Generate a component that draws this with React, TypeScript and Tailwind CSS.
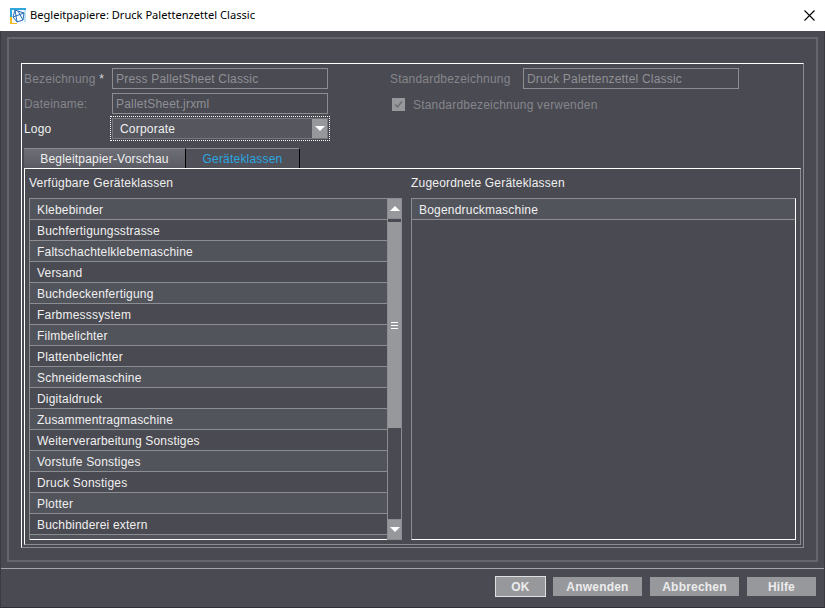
const available = [
  "Klebebinder",
  "Buchfertigungsstrasse",
  "Faltschachtelklebemaschine",
  "Versand",
  "Buchdeckenfertigung",
  "Farbmesssystem",
  "Filmbelichter",
  "Plattenbelichter",
  "Schneidemaschine",
  "Digitaldruck",
  "Zusammentragmaschine",
  "Weiterverarbeitung Sonstiges",
  "Vorstufe Sonstiges",
  "Druck Sonstiges",
  "Plotter",
  "Buchbinderei extern",
];

function TextField({ value }: { value: string }) {
  return (
    <div className="flex h-[21px] w-[216px] items-center border border-[#8c8d92] pl-[3px] text-[#8f9095]">
      {value}
    </div>
  );
}

function Row({ label, light }: { label: string; light: boolean }) {
  return (
    <div className={`flex h-[21px] items-center border-b border-[#8c8d92] pl-[7px] pt-[2px] text-[#f0f0f0] ${light ? "bg-[#52545c]" : ""}`}>
      {label}
    </div>
  );
}

function Arrow({ up }: { up?: boolean }) {
  return (
    <svg width="10" height="5" viewBox="0 0 10 5" className="fill-white">
      <path d={up ? "M5 0 L10 5 H0 Z" : "M0 0 H10 L5 5 Z"} />
    </svg>
  );
}

function FooterButton({ label, width, focus }: { label: string; width: string; focus?: boolean }) {
  return (
    <button className={`flex items-center justify-center bg-[#97989c] font-bold tracking-[0.2px] text-[#ececec] ${width} ${focus ? "-mr-px h-[21px] border border-[#e0e0e0]" : "h-[19px]"}`}>
      {label}
    </button>
  );
}

function AppIcon() {
  return (
    <svg width="16" height="16" viewBox="0 0 16 16" fill="none">
      <rect width="16" height="16" fill="#f4fafd" />
      <path d="M0 1 H16" stroke="#2fa6dc" strokeWidth="2" />
      <path d="M1 2 V9" stroke="#2fa6dc" strokeWidth="2" />
      <path d="M1 9 V16 H7" stroke="#f2bc1e" strokeWidth="2" />
      <path d="M15 2 V14" stroke="#8fd0ec" strokeWidth="1" />
      <path d="M5 2 L3 9 L7 14 L13 12 L14 5 L8 3 Z M5 2 L7 14 M3 9 L14 5 M8 3 L13 12" stroke="#2b6fb8" strokeWidth="1" />
    </svg>
  );
}

export default function App() {
  return (
    <div className="flex h-[608px] w-[825px] flex-col overflow-hidden bg-[#4a4a52] font-['Liberation_Sans',sans-serif] text-[12px] tracking-[0.2px]">
      <div className="flex h-[31px] shrink-0 items-center bg-white pl-[10px] pr-[10px] font-['Noto_Sans',sans-serif] tracking-normal text-black">
        <AppIcon />
        <span className="ml-[4px] flex-1 text-[11.1px]">Begleitpapiere: Druck Palettenzettel Classic</span>
        <svg width="11" height="11" viewBox="0 0 11 11" className="stroke-black">
          <path d="M0.5 0.5 L10.5 10.5 M10.5 0.5 L0.5 10.5" strokeWidth="1.1" />
        </svg>
      </div>

      <div className="flex flex-1 flex-col border-x border-b border-x-[#3a3a40] border-b-[#2f2f35]">
        <div className="mx-[6px] mt-[6px] h-[525px] border-2 border-[#65656d] p-[12px] pt-[24px]">
          <div className="flex h-[485px] flex-col border border-white border-r-[#8c8d92] border-b-[#8c8d92] px-[2px] pb-[2px] pt-[4px]">
            <div className="flex">
              <div className="flex w-[366px] flex-col gap-[4px]">
                <div className="flex items-center">
                  <span className="w-[88px] text-[#85868b]">
                    Bezeichnung <span className="text-[#d8d8d8]">*</span>
                  </span>
                  <TextField value="Press PalletSheet Classic" />
                </div>
                <div className="flex items-center">
                  <span className="w-[88px] text-[#85868b]">Dateiname:</span>
                  <TextField value="PalletSheet.jrxml" />
                </div>
                <div className="flex items-center">
                  <span className="w-[88px] text-[#f0f0f0]">Logo</span>
                  <div className="flex h-[21px] w-[216px] items-center justify-between border border-[#77787e] bg-[#55565e] pl-[7px] text-[#f0f0f0] outline-1 outline-offset-[1px] outline-white outline-dotted">
                    Corporate
                    <span className="flex h-full w-[15px] items-center justify-center bg-[#97989c]">
                      <Arrow />
                    </span>
                  </div>
                </div>
              </div>
              <div className="flex flex-col gap-[4px]">
                <div className="flex items-center">
                  <span className="w-[133px] text-[#85868b]">Standardbezeichnung</span>
                  <TextField value="Druck Palettenzettel Classic" />
                </div>
                <div className="flex h-[21px] items-center pl-[2px] pt-[2px] text-[#85868b]">
                  <span className="mr-[8px] flex h-[13px] w-[13px] items-center justify-center bg-[#97989c]">
                    <svg width="9" height="9" viewBox="0 0 9 9" fill="none" className="stroke-[#6c6d73]">
                      <path d="M1 4.5 L3.5 7 L8 1.5" strokeWidth="1.5" />
                    </svg>
                  </span>
                  Standardbezeichnung verwenden
                </div>
              </div>
            </div>

            <div className="mt-[9px] flex h-[20px] shrink-0">
              <div className="flex w-[161px] items-center justify-center border-t border-[#8c8d92] bg-gradient-to-b from-[#6e6f76] to-[#5a5b63] text-[#f0f0f0]">
                Begleitpapier-Vorschau
              </div>
              <div className="flex w-[115px] items-center justify-center border-x border-t border-x-black border-t-[#8c8d92] bg-[#4f5058] text-[#2ba6e0]">
                Geräteklassen
              </div>
            </div>

            <div className="flex flex-1 gap-[9px] border border-white border-r-[#8c8d92] border-b-[#8c8d92] px-[4px] pb-[4px]">
              <div className="flex w-[373px] flex-col">
                <div className="flex h-[29px] items-center pb-[2px] text-[#f0f0f0]">Verfügbare Geräteklassen</div>
                <div className="flex h-[342px] border-t border-l border-[#8c8d92]">
                  <div className="flex w-[357px] flex-col border-b border-b-white">
                    {available.map((label, i) => (
                      <Row key={label} label={label} light={i % 2 === 0} />
                    ))}
                    <div className="flex-1 bg-[#52545c]" />
                  </div>
                  <div className="flex w-[15px] flex-col border-r border-l border-[#8c8d92]">
                    <div className="flex h-[20px] items-center justify-center border-b border-[#8c8d92] bg-[#97989c]">
                      <Arrow up />
                    </div>
                    <div className="mt-[3px] flex h-[206px] flex-col items-center justify-center gap-[2px] bg-[#97989c]">
                      <div className="h-px w-[7px] bg-white" />
                      <div className="h-px w-[7px] bg-white" />
                      <div className="h-px w-[7px] bg-white" />
                    </div>
                    <div className="flex-1" />
                    <div className="flex h-[21px] items-center justify-center border-y border-[#8c8d92] bg-[#97989c]">
                      <Arrow />
                    </div>
                  </div>
                </div>
              </div>
              <div className="flex flex-1 flex-col">
                <div className="flex h-[29px] items-center pb-[2px] text-[#f0f0f0]">Zugeordnete Geräteklassen</div>
                <div className="h-[342px] border border-[#8c8d92] border-r-white border-b-white">
                  <Row label="Bogendruckmaschine" light />
                </div>
              </div>
            </div>
          </div>
        </div>

        <div className="mt-[6px] flex flex-1 items-center justify-end gap-[8px] border-t border-[#a3a4a8] pb-[3px] pr-[8px]">
          <FooterButton label="OK" width="w-[51px]" focus />
          <FooterButton label="Anwenden" width="w-[89px]" />
          <FooterButton label="Abbrechen" width="w-[89px]" />
          <FooterButton label="Hilfe" width="w-[69px]" />
        </div>
      </div>
    </div>
  );
}
